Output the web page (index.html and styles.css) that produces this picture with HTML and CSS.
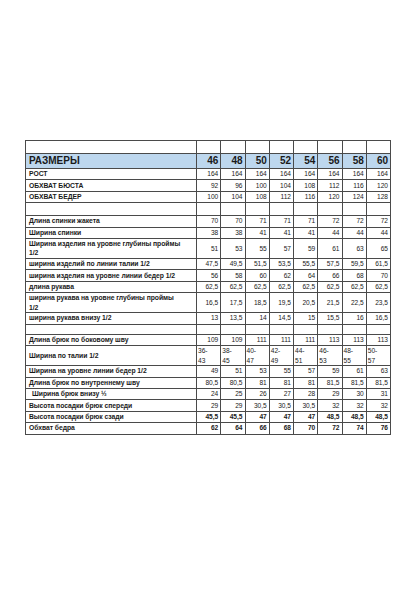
FILE: index.html
```html
<!DOCTYPE html>
<html lang="ru">
<head>
<meta charset="utf-8">
<title>Размеры</title>
<link rel="stylesheet" href="styles.css">
</head>
<body>
<div class="page">
<table class="sizes">
<colgroup><col class="c-label"><col><col><col><col><col><col><col><col></colgroup>
<tbody>
<tr class="r-empty-top"><td></td><td></td><td></td><td></td><td></td><td></td><td></td><td></td><td></td></tr>
<tr class="r-head"><td class="lbl">РАЗМЕРЫ</td><td>46</td><td>48</td><td>50</td><td>52</td><td>54</td><td>56</td><td>58</td><td>60</td></tr>
<tr class="r"><td class="lbl">РОСТ</td><td>164</td><td>164</td><td>164</td><td>164</td><td>164</td><td>164</td><td>164</td><td>164</td></tr>
<tr class="r"><td class="lbl">ОБХВАТ БЮСТА</td><td>92</td><td>96</td><td>100</td><td>104</td><td>108</td><td>112</td><td>116</td><td>120</td></tr>
<tr class="r"><td class="lbl">ОБХВАТ БЕДЕР</td><td>100</td><td>104</td><td>108</td><td>112</td><td>116</td><td>120</td><td>124</td><td>128</td></tr>
<tr class="r-empty"><td></td><td></td><td></td><td></td><td></td><td></td><td></td><td></td><td></td></tr>
<tr class="r"><td class="lbl">Длина спинки жакета</td><td>70</td><td>70</td><td>71</td><td>71</td><td>71</td><td>72</td><td>72</td><td>72</td></tr>
<tr class="r"><td class="lbl">Ширина спинки</td><td>38</td><td>38</td><td>41</td><td>41</td><td>41</td><td>44</td><td>44</td><td>44</td></tr>
<tr class="r2"><td class="lbl">Ширина изделия на уровне глубины проймы<br>1/2</td><td>51</td><td>53</td><td>55</td><td>57</td><td>59</td><td>61</td><td>63</td><td>65</td></tr>
<tr class="r"><td class="lbl">ширина изделий по линии талии 1/2</td><td>47,5</td><td>49,5</td><td>51,5</td><td>53,5</td><td>55,5</td><td>57,5</td><td>59,5</td><td>61,5</td></tr>
<tr class="r"><td class="lbl">ширина изделия на уровне линии бедер 1/2</td><td>56</td><td>58</td><td>60</td><td>62</td><td>64</td><td>66</td><td>68</td><td>70</td></tr>
<tr class="r"><td class="lbl">длина рукава</td><td>62,5</td><td>62,5</td><td>62,5</td><td>62,5</td><td>62,5</td><td>62,5</td><td>62,5</td><td>62,5</td></tr>
<tr class="r2"><td class="lbl">ширина рукава на уровне глубины проймы<br>1/2</td><td>16,5</td><td>17,5</td><td>18,5</td><td>19,5</td><td>20,5</td><td>21,5</td><td>22,5</td><td>23,5</td></tr>
<tr class="r"><td class="lbl">ширина рукава внизу 1/2</td><td>13</td><td>13,5</td><td>14</td><td>14,5</td><td>15</td><td>15,5</td><td>16</td><td>16,5</td></tr>
<tr class="r-empty2"><td></td><td></td><td></td><td></td><td></td><td></td><td></td><td></td><td></td></tr>
<tr class="r"><td class="lbl">Длина брюк по боковому шву</td><td>109</td><td>109</td><td>111</td><td>111</td><td>111</td><td>113</td><td>113</td><td>113</td></tr>
<tr class="r2 split"><td class="lbl">Ширина по талии 1/2</td><td>36-<br>43</td><td>38-<br>45</td><td>40-<br>47</td><td>42-<br>49</td><td>44-<br>51</td><td>46-<br>53</td><td>48-<br>55</td><td>50-<br>57</td></tr>
<tr class="r"><td class="lbl">Ширина на уровне линии бедер 1/2</td><td>49</td><td>51</td><td>53</td><td>55</td><td>57</td><td>59</td><td>61</td><td>63</td></tr>
<tr class="r"><td class="lbl">Длина брюк по внутреннему шву</td><td>80,5</td><td>80,5</td><td>81</td><td>81</td><td>81</td><td>81,5</td><td>81,5</td><td>81,5</td></tr>
<tr class="r"><td class="lbl indent">Ширина брюк внизу ½</td><td>24</td><td>25</td><td>26</td><td>27</td><td>28</td><td>29</td><td>30</td><td>31</td></tr>
<tr class="r"><td class="lbl">Высота посадки брюк спереди</td><td>29</td><td>29</td><td>30,5</td><td>30,5</td><td>30,5</td><td>32</td><td>32</td><td>32</td></tr>
<tr class="r bold"><td class="lbl">Высота посадки брюк сзади</td><td>45,5</td><td>45,5</td><td>47</td><td>47</td><td>47</td><td>48,5</td><td>48,5</td><td>48,5</td></tr>
<tr class="r bold"><td class="lbl">Обхват бедра</td><td>62</td><td>64</td><td>66</td><td>68</td><td>70</td><td>72</td><td>74</td><td>76</td></tr>
</tbody>
</table>
</div>
</body>
</html>
```
FILE: styles.css
```css
html, body {
  margin: 0;
  padding: 0;
  background: #ffffff;
}
.page {
  padding: 140px 0 0 25px;
}
.sizes {
  border-collapse: collapse;
  table-layout: fixed;
  width: 366px;
  font-family: "Liberation Sans", Arial, sans-serif;
  color: #1a1a1a;
}
.c-label {
  width: 171px;
}
.sizes td {
  border: 1px solid #4a4a4a;
  padding: 0 2px 0 0;
  font-size: 6.6px;
  line-height: 8px;
  text-align: right;
  vertical-align: middle;
  overflow: hidden;
  white-space: nowrap;
}
.sizes td.lbl {
  text-align: left;
  padding-left: 3px;
  font-weight: bold;
  font-size: 6.8px;
  letter-spacing: -0.05px;
}
.sizes td.indent {
  padding-left: 6px;
}
.r-empty-top td { height: 11.5px; }
.r-head td {
  height: 13.5px;
  background: #bdd7ee;
  font-size: 10px;
  font-weight: bold;
  line-height: 12px;
  padding-top: 1px;
}
.r-head td.lbl {
  font-size: 10px;
  letter-spacing: 0;
}
.r td { height: 10.4px; }
.r2 td { height: 19px; line-height: 9.5px; }
.r-empty td { height: 12px; }
.r-empty2 td { height: 9.4px; }
.split td:not(.lbl) {
  text-align: left;
  padding-left: 1px;
}
.bold td { font-weight: bold; }
```
